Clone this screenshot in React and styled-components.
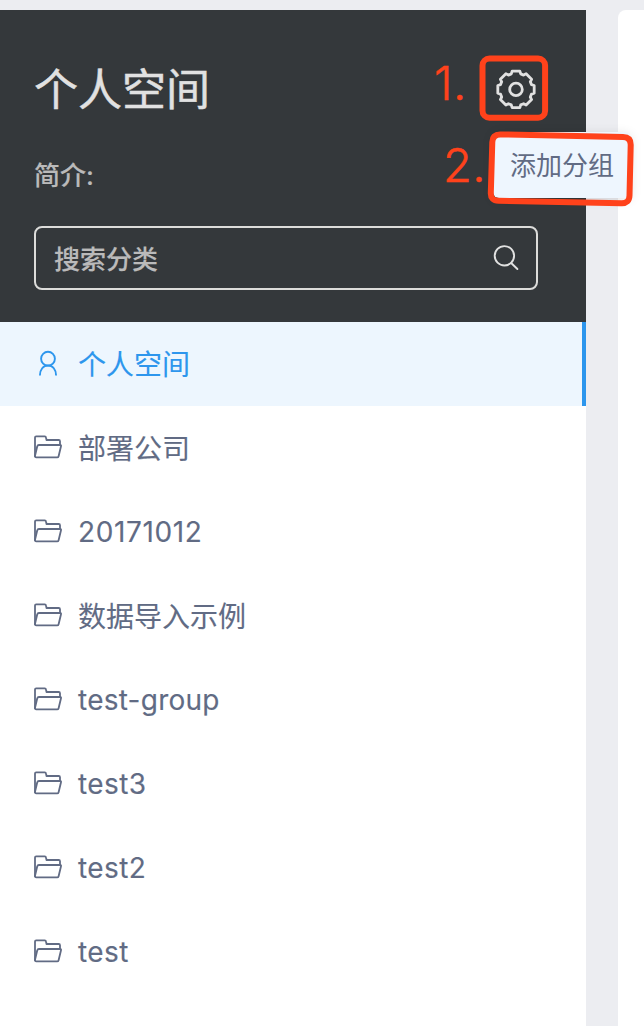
import React from "react";
import styled, { createGlobalStyle } from "styled-components";

const GlobalStyle = createGlobalStyle`
  * { box-sizing: border-box; }
  body {
    margin: 0;
    background: #ecedf1;
    font-family: Inter, "Noto Sans CJK SC", sans-serif;
  }
`;

const Page = styled.div`
  position: relative;
  display: flex;
  gap: 32px;
  width: 644px;
  height: 1026px;
  padding-top: 10px;
  overflow: hidden;
`;

const Sidebar = styled.aside`
  width: 586px;
  flex: none;
  background: #fff;
`;

const Content = styled.main`
  flex: 1;
  background: #fff;
  border-top-left-radius: 8px;
`;

const Header = styled.header`
  height: 312px;
  padding: 46px 48px 32px 34px;
  background: #34383b;
`;

const TitleRow = styled.div`
  display: flex;
  align-items: center;
  justify-content: space-between;
  height: 66px;
`;

const Title = styled.h1`
  margin: 0;
  padding-top: 2px;
  color: #e1e1e1;
  font-size: 44px;
  line-height: 66px;
  font-weight: 400;
  -webkit-text-stroke: 0.5px currentColor;
`;

const Intro = styled.p`
  margin: 34px 0 0;
  height: 70px;
  color: #bababa;
  font-size: 26px;
  line-height: 40px;
  font-weight: 500;
  -webkit-text-stroke: 0.15px currentColor;
`;

const SearchBox = styled.div`
  display: flex;
  align-items: center;
  justify-content: space-between;
  height: 64px;
  width: 504px;
  padding: 0 16px 2px 18px;
  border: 2px solid #dcdcda;
  border-radius: 8px;
  color: #bababa;
  font-size: 26px;
  font-weight: 500;

  span { -webkit-text-stroke: 0.15px currentColor; }
`;

const Menu = styled.ul`
  margin: 0;
  padding: 0;
  list-style: none;
`;

const MenuItem = styled.li`
  display: flex;
  align-items: center;
  gap: 16px;
  height: 84px;
  padding-left: 34px;
  border-right: 4px solid ${(p) => (p.$active ? "#2d96ed" : "transparent")};
  background: ${(p) => (p.$active ? "#edf6fe" : "transparent")};
  color: ${(p) => (p.$active ? "#2d96ed" : "#616b84")};
  font-size: 28px;
  line-height: 42px;
  letter-spacing: ${(p) => p.$tracking || "0"};

  svg { flex: none; }
  span {
    padding-top: ${(p) => (p.$tracking ? "0" : "2px")};
    -webkit-text-stroke: 0.12px currentColor;
  }
`;

const Popup = styled.div`
  position: absolute;
  left: 493px;
  top: 132px;
  width: 138px;
  height: 66px;
  padding-left: 17px;
  border-radius: 6px;
  background: #eef6fe;
  box-shadow: 0 2px 12px rgba(0, 0, 0, 0.12);
  color: #616b84;
  font-size: 26px;
  line-height: 67px;
  white-space: nowrap;
`;

const Marks = styled.svg`
  position: absolute;
  left: 0;
  top: 0;
  pointer-events: none;
`;

const StepLabel = styled.span`
  position: absolute;
  left: ${(p) => p.$x}px;
  top: ${(p) => p.$y}px;
  color: #ff421b;
  font-size: 47px;
  line-height: 56px;
  font-weight: 300;
  letter-spacing: 0.5px;
  -webkit-text-stroke: 0.5px currentColor;
`;

const gearPoints = Array.from({ length: 8 }, (_, i) =>
  [[-12, 18.6], [12, 18.6], [17, 16.2], [28, 16.2]].map(([offset, radius]) => {
    const angle = ((i * 45 + offset - 90) * Math.PI) / 180;
    return `${(Math.cos(angle) * radius).toFixed(2)},${(Math.sin(angle) * radius).toFixed(2)}`;
  }).join(" ")
).join(" ");

const GearIcon = () => (
  <svg width="44" height="44" viewBox="-22 -22.4 44 44" fill="none" stroke="#e1e1e1" strokeWidth="2.8" strokeLinejoin="round">
    <polygon points={gearPoints} />
    <circle r="6.3" />
  </svg>
);

const SearchIcon = () => (
  <svg width="28" height="28" viewBox="0 0 28 28" fill="none" stroke="#e1e1e1" strokeWidth="1.9" strokeLinecap="round">
    <circle cx="12.4" cy="12.8" r="9.7" />
    <path d="M19.4 20.2 25.4 26" />
  </svg>
);

const UserIcon = () => (
  <svg width="28" height="28" viewBox="0 0 28 28" fill="none" stroke="currentColor" strokeWidth="1.9">
    <circle cx="14" cy="8.7" r="6.9" />
    <path d="M5.9 25.5c0-6 3.4-10 8.1-10s8.1 4 8.1 10" />
  </svg>
);

const FolderIcon = () => (
  <svg width="28" height="28" viewBox="0 1 28 28" fill="none" stroke="currentColor" strokeWidth="1.8" strokeLinejoin="round">
    <path d="M1 24V4.5q0-1.2 1.2-1.2h8.6q1 0 1.2 1.2l.5 2.5h12.2q1.3 0 1.3 1.3v3.8" />
    <path d="M1 22.8 3.2 13.5q.4-1.5 1.7-1.5h21.2q1.2 0 .9 1.2l-2.4 10q-.3 1.2-1.5 1.2H2.2Q1 24.4 1 22.8Z" />
  </svg>
);

const groups = [
  { name: "个人空间", active: true },
  { name: "部署公司" },
  { name: "20171012", tracking: "0.62px" },
  { name: "数据导入示例" },
  { name: "test-group", tracking: "0.25px" },
  { name: "test3", tracking: "0.4px" },
  { name: "test2", tracking: "0.4px" },
  { name: "test", tracking: "0.4px" },
];

export default function App() {
  return (
    <Page>
      <GlobalStyle />
      <Sidebar>
        <Header>
          <TitleRow>
            <Title>个人空间</Title>
            <GearIcon />
          </TitleRow>
          <Intro>简介:</Intro>
          <SearchBox>
            <span>搜索分类</span>
            <SearchIcon />
          </SearchBox>
        </Header>
        <Menu>
          {groups.map((g) => (
            <MenuItem key={g.name} $active={g.active} $tracking={g.tracking}>
              {g.active ? <UserIcon /> : <FolderIcon />}
              <span>{g.name}</span>
            </MenuItem>
          ))}
        </Menu>
      </Sidebar>
      <Content />
      <Popup>添加分组</Popup>
      <Marks width="644" height="240" fill="none" stroke="#ff421b" strokeWidth="6">
        <rect x="482.5" y="58.5" width="62.6" height="59.2" rx="7" />
        <path d="M500.5 134.4 623 137.1Q630.8 137.3 630.7 145L629.5 195.5Q629.3 203.4 621.5 203.2L498.5 200.8Q490.6 200.6 490.8 193L492.3 142Q492.5 134.2 500.5 134.4Z" />
      </Marks>
      <StepLabel $x={434} $y={55}>1.</StepLabel>
      <StepLabel $x={443} $y={137}>2.</StepLabel>
    </Page>
  );
}
